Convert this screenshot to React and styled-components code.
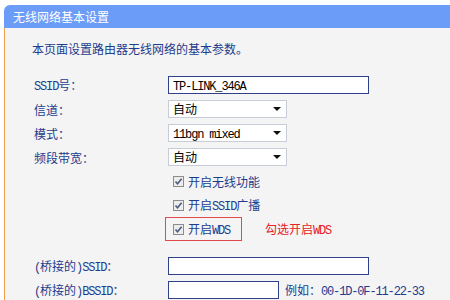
import styled, { createGlobalStyle } from "styled-components";

const GlobalStyle = createGlobalStyle`
  html, body {
    margin: 0;
    padding: 0;
    background: #ffffff;
  }
  body {
    width: 450px;
    height: 300px;
    overflow: hidden;
    font-family: "Noto Sans CJK SC", "Noto Sans", sans-serif;
    font-size: 12px;
  }
`;

const Page = styled.div`
  padding: 5px 0 0 4px;
`;

const Header = styled.div`
  height: 23px;
  line-height: 23px;
  padding-left: 9px;
  background: #6b9cf8;
  border-top-left-radius: 6px;
  color: #ffffff;
  font-size: 12px;
`;

const Panel = styled.div`
  box-sizing: border-box;
  height: 272px;
  padding-top: 12px;
  background: #f4f4f4;
  border-left: 1px solid #f0a050;
  color: #1c3c8e;
  overflow: hidden;
`;

const Intro = styled.div`
  padding-left: 27px;
  line-height: 18px;
  margin-bottom: 15px;
`;

const Lat = styled.span`
  font-family: "Liberation Mono", monospace;
  font-size: 12px;
  letter-spacing: -1.15px;
`;

const Row = styled.div`
  display: grid;
  grid-template-columns: 134px auto;
  align-items: center;
  height: 24px;
  padding-left: 29px;
  margin-top: ${(p) => p.$gap || 0}px;
`;

const Label = styled.div`
  white-space: nowrap;
`;

const Control = styled.div`
  display: flex;
  align-items: center;
`;

const TextBox = styled.div`
  box-sizing: border-box;
  width: ${(p) => p.$w}px;
  height: 18px;
  padding-left: 4px;
  line-height: 16px;
  background: #ffffff;
  border: 1px solid #2f4289;
  color: #000000;
`;

const SelectBox = styled.div`
  box-sizing: border-box;
  position: relative;
  width: 119px;
  height: 18px;
  padding-left: 4px;
  line-height: 16px;
  background: #ffffff;
  border: 1px solid #c6ccd8;
  color: #000000;
`;

const Arrow = styled.span`
  position: absolute;
  right: 5px;
  top: 6px;
  width: 0;
  height: 0;
  border-left: 4px solid transparent;
  border-right: 4px solid transparent;
  border-top: 4px solid #111111;
`;

const CheckItem = styled.div`
  display: flex;
  align-items: center;
  gap: 4px;
  margin-left: 5px;
  white-space: nowrap;
`;

const Box = styled.span`
  box-sizing: border-box;
  display: inline-flex;
  align-items: center;
  justify-content: center;
  width: 11px;
  height: 11px;
  background: #ececec;
  border: 1px solid #8c8c8c;
`;

const Highlight = styled.div`
  box-sizing: border-box;
  display: flex;
  align-items: center;
  width: 77px;
  height: 24px;
  margin-left: -3px;
  padding-left: 2px;
  border: 1px solid #e04a4a;
`;

const Hint = styled.span`
  margin-left: 23px;
  color: #e8202a;
  white-space: nowrap;
`;

const Example = styled.span`
  margin-left: 6px;
  white-space: nowrap;
`;

function Check({ children }) {
  return (
    <CheckItem>
      <Box>
        <svg width="9" height="9" viewBox="0 0 9 9">
          <path d="M1.5 4.5 L3.5 6.8 L7.6 1.8" fill="none" stroke="#4d5c7d" strokeWidth="1.6" />
        </svg>
      </Box>
      <span>{children}</span>
    </CheckItem>
  );
}

function Select({ children }) {
  return (
    <SelectBox>
      {children}
      <Arrow />
    </SelectBox>
  );
}

export default function App() {
  return (
    <>
      <GlobalStyle />
      <Page>
        <Header>无线网络基本设置</Header>
        <Panel>
          <Intro>本页面设置路由器无线网络的基本参数。</Intro>
          <Row>
            <Label><Lat>SSID</Lat>号：</Label>
            <Control>
              <TextBox $w={201}><Lat>TP-LINK_346A</Lat></TextBox>
            </Control>
          </Row>
          <Row>
            <Label>信道：</Label>
            <Control><Select>自动</Select></Control>
          </Row>
          <Row>
            <Label>模式：</Label>
            <Control><Select><Lat>11bgn mixed</Lat></Select></Control>
          </Row>
          <Row>
            <Label>频段带宽：</Label>
            <Control><Select>自动</Select></Control>
          </Row>
          <Row>
            <Label />
            <Control><Check>开启无线功能</Check></Control>
          </Row>
          <Row>
            <Label />
            <Control><Check>开启<Lat>SSID</Lat>广播</Check></Control>
          </Row>
          <Row>
            <Label />
            <Control>
              <Highlight><Check>开启<Lat>WDS</Lat></Check></Highlight>
              <Hint>勾选开启<Lat>WDS</Lat></Hint>
            </Control>
          </Row>
          <Row $gap={13}>
            <Label><Lat>(</Lat>桥接的<Lat>)SSID</Lat>：</Label>
            <Control><TextBox $w={201} /></Control>
          </Row>
          <Row>
            <Label><Lat>(</Lat>桥接的<Lat>)BSSID</Lat>：</Label>
            <Control>
              <TextBox $w={111} />
              <Example>例如：<Lat>00-1D-0F-11-22-33</Lat></Example>
            </Control>
          </Row>
        </Panel>
      </Page>
    </>
  );
}
